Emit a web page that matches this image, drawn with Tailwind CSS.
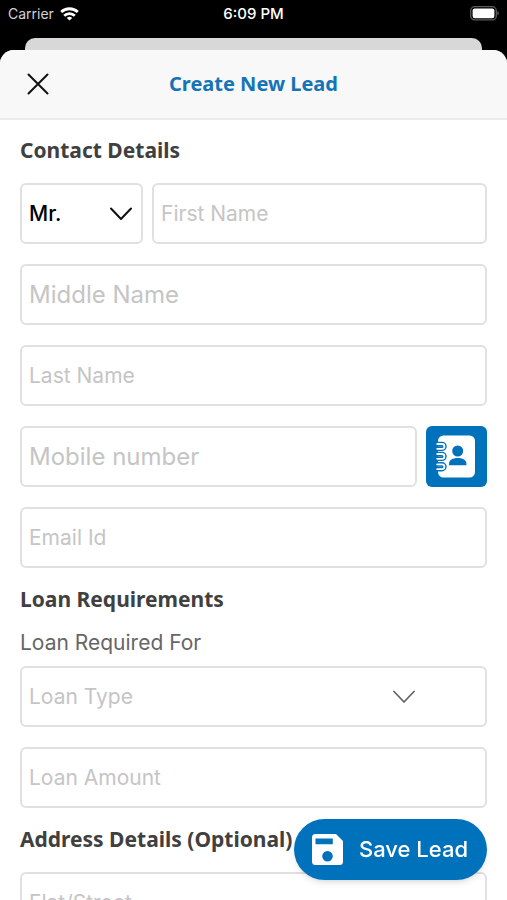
<!DOCTYPE html>
<html lang="en">
<head>
<meta charset="utf-8">
<meta name="viewport" content="width=device-width, initial-scale=1">
<title>Create New Lead</title>
<script src="https://cdn.jsdelivr.net/npm/@tailwindcss/browser@4"></script>
</head>
<body class="flex h-screen flex-col overflow-hidden bg-black font-['Inter',sans-serif] text-[21px]">
  <!-- Status bar -->
  <div class="grid h-[38px] shrink-0 grid-cols-3 items-start px-2 pt-1 text-[14px] leading-5 text-white">
    <div class="flex items-center gap-1.5 text-[#d4d4d4]">
      <span>Carrier</span>
      <svg class="h-[14px] w-[19px]" viewBox="0 0 19 14" fill="none" stroke="#fff" stroke-width="2.8" aria-hidden="true">
        <path d="M1.2 5.1a12 12 0 0 1 16.6 0"/>
        <path d="M4.2 8.7a7.6 7.6 0 0 1 10.6 0"/>
        <path d="M9.5 13.6 6.8 11a4.2 4.2 0 0 1 5.4 0Z" fill="#fff" stroke="none"/>
      </svg>
    </div>
    <div class="text-center text-[15px] font-medium">6:09 PM</div>
    <div class="flex justify-end pt-[2px]">
      <svg class="h-[15px] w-[30px]" viewBox="0 0 30 15" aria-hidden="true">
        <rect x="1.7" y=".7" width="25.6" height="13.2" rx="4" fill="none" stroke="#5c5c5c" stroke-width="1.3"/>
        <rect x="3.6" y="2.4" width="21.8" height="9.8" rx="2.2" fill="#fff"/>
        <path d="M28.4 5v4.6q1.5-.8 1.5-2.3T28.4 5Z" fill="#5c5c5c"/>
      </svg>
    </div>
  </div>
  <div class="mx-[25px] h-3 shrink-0 rounded-t-[10px] bg-[#d8d8d8]"></div>

  <div class="flex min-h-0 flex-1 flex-col overflow-hidden rounded-t-[14px] bg-white">
    <header class="grid h-[70px] shrink-0 grid-cols-[56px_1fr_56px] items-center border-b-2 border-[#ebebeb] bg-[#f8f8f8]">
      <button type="button" aria-label="Close" class="flex justify-end pr-1.5">
        <svg class="h-6 w-6" viewBox="0 0 24 24" fill="none" stroke="#111" stroke-width="2" stroke-linecap="round" aria-hidden="true"><path d="m2.5 2.5 19 19m0-19-19 19"/></svg>
      </button>
      <h1 class="text-center font-['Noto_Sans',sans-serif] text-[20px] leading-7 font-bold text-[#1474b6]">Create New Lead</h1>
    </header>

    <form class="flex flex-col gap-[17px] px-5 pt-4">
      <section class="flex flex-col gap-[19px]">
        <h2 class="font-['Noto_Sans',sans-serif] text-[21px] leading-7 font-bold text-[#404040]">Contact Details</h2>
        <div class="flex flex-col gap-5">
          <div class="flex gap-[9px]">
            <div class="relative w-[123px] shrink-0">
              <select aria-label="Title" class="h-[61px] w-full appearance-none rounded-md border-2 border-[#e0e0e0] bg-white px-[7px] font-medium text-black">
                <option>Mr.</option><option>Mrs.</option><option>Ms.</option>
              </select>
              <svg class="pointer-events-none absolute top-6 right-2.5 h-[14px] w-6" viewBox="0 0 24 14" fill="none" stroke="#111" stroke-width="2" stroke-linecap="round" stroke-linejoin="round" aria-hidden="true"><path d="M2 1.5l10 10.5L22 1.5"/></svg>
            </div>
            <input type="text" aria-label="First Name" placeholder="First Name" class="h-[61px] min-w-0 flex-1 rounded-md border-2 border-[#e0e0e0] px-[7px] placeholder:text-[#c5c5c5]">
          </div>
          <input type="text" aria-label="Middle Name" placeholder="Middle Name" class="h-[61px] rounded-md border-2 border-[#e0e0e0] px-[7px] text-[24px] placeholder:text-[#c5c5c5]">
          <input type="text" aria-label="Last Name" placeholder="Last Name" class="h-[61px] rounded-md border-2 border-[#e0e0e0] px-[7px] placeholder:text-[#c5c5c5]">
          <div class="flex gap-[9px]">
            <input type="tel" aria-label="Mobile number" placeholder="Mobile number" class="h-[61px] min-w-0 flex-1 rounded-md border-2 border-[#e0e0e0] px-[7px] text-[24px] placeholder:text-[#c5c5c5]">
            <button type="button" aria-label="Choose from contacts" class="flex h-[61px] w-[61px] shrink-0 items-center justify-center rounded-md bg-[#0072bc]">
              <svg class="h-[61px] w-[61px]" viewBox="0 0 61 61" aria-hidden="true">
                <rect x="12" y="9.5" width="37" height="42" rx="5.5" fill="#fff"/>
                <g fill="none" stroke-linecap="round" stroke-linejoin="round">
                  <g stroke="#0072bc" stroke-width="4.6"><path d="M11.2 18H16a2.4 2.4 0 0 1 0 4.8H11.2M11.2 28H16a2.4 2.4 0 0 1 0 4.8H11.2M11.2 38.4H16a2.4 2.4 0 0 1 0 4.8H11.2"/></g>
                  <g stroke="#fff" stroke-width="1.8"><path d="M11.2 18H16a2.4 2.4 0 0 1 0 4.8H11.2M11.2 28H16a2.4 2.4 0 0 1 0 4.8H11.2M11.2 38.4H16a2.4 2.4 0 0 1 0 4.8H11.2"/></g>
                </g>
                <circle cx="31.7" cy="25" r="5.5" fill="#0072bc"/>
                <path d="M23 39.2v-1.4c0-3.7 3.6-5.8 8.7-5.8s8.7 2.1 8.7 5.8v1.4Z" fill="#0072bc"/>
              </svg>
            </button>
          </div>
          <input type="email" aria-label="Email Id" placeholder="Email Id" class="h-[61px] rounded-md border-2 border-[#e0e0e0] px-[7px] placeholder:text-[#c5c5c5]">
        </div>
      </section>

      <section class="flex flex-col">
        <h2 class="font-['Noto_Sans',sans-serif] text-[21px] leading-7 font-bold text-[#404040]">Loan Requirements</h2>
        <label for="loan-type" class="mt-4 mb-[9px] leading-7 text-[#666]">Loan Required For</label>
        <div class="relative">
          <select id="loan-type" class="h-[61px] w-full appearance-none rounded-md border-2 border-[#e0e0e0] bg-white px-[7px] text-[#c5c5c5]">
            <option>Loan Type</option>
          </select>
          <svg class="pointer-events-none absolute top-6 right-[71px] h-[14px] w-6" viewBox="0 0 24 14" fill="none" stroke="#666" stroke-width="1.8" stroke-linecap="round" stroke-linejoin="round" aria-hidden="true"><path d="M2 1.5l10 10.5L22 1.5"/></svg>
        </div>
        <input type="text" aria-label="Loan Amount" placeholder="Loan Amount" class="mt-5 h-[61px] rounded-md border-2 border-[#e0e0e0] px-[7px] placeholder:text-[#c5c5c5]">
      </section>

      <section class="flex flex-col gap-[19px]">
        <h2 class="font-['Noto_Sans',sans-serif] text-[21px] leading-7 font-bold text-[#404040]">Address Details (Optional)</h2>
        <input type="text" aria-label="Flat/Street" placeholder="Flat/Street" class="h-[61px] rounded-md border-2 border-[#e0e0e0] px-[7px] placeholder:text-[#c5c5c5]">
      </section>
    </form>
  </div>

  <button type="button" class="fixed right-5 bottom-5 flex h-[61px] items-center gap-4 rounded-full bg-[#0072bc] pr-[19px] pl-[18px] text-[22px] font-medium text-white shadow-md">
    <svg class="h-[31px] w-[31px]" viewBox="0 0 31 31" aria-hidden="true">
      <path fill="#fff" fill-rule="evenodd" d="M3.5 0H24l7 7v20.5a3.5 3.5 0 0 1-3.5 3.5h-24A3.5 3.5 0 0 1 0 27.5v-24A3.5 3.5 0 0 1 3.5 0ZM3.5 4.5v5.7h17.3V4.5ZM15.5 17a5.3 5.3 0 1 0 0 10.6 5.3 5.3 0 0 0 0-10.6Z"/>
    </svg>
    <span>Save Lead</span>
  </button>
</body>
</html>
